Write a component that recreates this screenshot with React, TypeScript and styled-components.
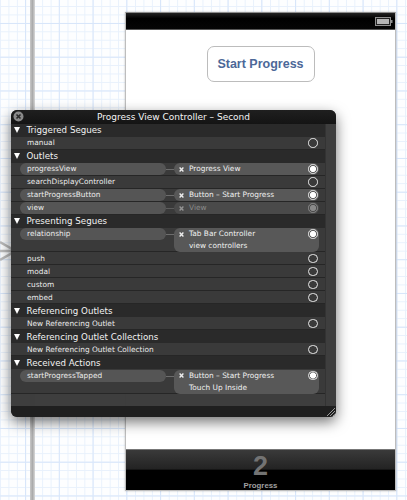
import styled, {createGlobalStyle} from 'styled-components';

const GlobalStyle = createGlobalStyle`
	html, body {
		margin: 0;
		padding: 0;
		background: #fff;
	}
`;

const Canvas = styled.div`
	position: relative;
	width: 407px;
	height: 500px;
	overflow: hidden;
	background-color: #fdfeff;
	background-image:
		linear-gradient(to right, #d8e6fa 1px, transparent 1px),
		linear-gradient(to bottom, #d8e6fa 1px, transparent 1px),
		linear-gradient(to right, #e8f1fc 1px, transparent 1px),
		linear-gradient(to bottom, #e8f1fc 1px, transparent 1px);
	background-size: 33.75px 33.75px, 33.75px 33.75px, 8.4375px 8.4375px, 8.4375px 8.4375px;
	background-position: 25px 23px, 25px 23px, 0 6px, 0 6px;
`;

const SegueRail = styled.div`
	position: absolute;
	left: 30px;
	top: 0;
	width: 5px;
	height: 500px;
	background: linear-gradient(to right, #c8c8c8, #ababab 50%, #d8d8d8);
`;

const SegueCross = styled.svg`
	position: absolute;
	left: 0;
	top: 240px;
`;

const Phone = styled.div`
	position: absolute;
	left: 125px;
	top: 12px;
	width: 271px;
	height: 479px;
	display: flex;
	flex-direction: column;
	box-sizing: border-box;
	background: #fff;
	border: 1px solid #bdbdbd;
	border-top-color: #8c8c8c;
	box-shadow: 0 0 2px rgba(0, 0, 0, 0.25);
`;

const StatusBar = styled.div`
	height: 16px;
	display: flex;
	justify-content: flex-end;
	align-items: center;
	padding-right: 2px;
	background: linear-gradient(to bottom, #222, #000 35%, #050505);
	border-bottom: 1px solid #555;
`;

const Body = styled.div`
	flex: 1;
	display: flex;
	justify-content: center;
	align-items: flex-start;
	padding-top: 16px;
`;

const StartButton = styled.button`
	width: 108px;
	height: 36px;
	padding: 0;
	border: 1px solid #bcbcbc;
	border-radius: 7px;
	background: #fff;
	color: #4c6898;
	font-family: 'Liberation Sans', Arial, sans-serif;
	font-size: 12.5px;
	font-weight: 700;
`;

const TabBar = styled.div`
	height: 41px;
	display: flex;
	flex-direction: column;
	align-items: center;
	background: linear-gradient(to bottom, #3a3a3a 0, #232323 48%, #000 50%, #000 100%);
	border-top: 1px solid #777;
	box-sizing: border-box;
`;

const TabGlyph = styled.div`
	margin-top: 2px;
	height: 29px;
	color: #737373;
	font-family: 'Liberation Sans', Arial, sans-serif;
	font-size: 27px;
	line-height: 28px;
	font-weight: 700;
`;

const TabLabel = styled.div`
	color: #a0a0a0;
	font-family: 'Liberation Sans', Arial, sans-serif;
	font-size: 7.8px;
	line-height: 9px;
	font-weight: 700;
`;

const Inspector = styled.div`
	position: absolute;
	left: 11px;
	top: 110px;
	width: 325px;
	height: 307px;
	display: flex;
	flex-direction: column;
	border-radius: 6px;
	overflow: hidden;
	background: rgba(58, 58, 58, 0.98);
	font-family: 'DejaVu Sans', Verdana, sans-serif;
	color: #eee;
`;

const InspectorShadow = styled.div`
	position: absolute;
	left: 11px;
	top: 110px;
	width: 325px;
	height: 307px;
	border-radius: 6px;
	box-shadow: 0 5px 14px rgba(0, 0, 0, 0.55);
`;

const TitleBar = styled.div`
	position: relative;
	height: 13.5px;
	flex: none;
	display: flex;
	justify-content: center;
	align-items: center;
	background: linear-gradient(to bottom, #1f1f1f, #141414);
	color: #f4f4f4;
	font-size: 9px;
`;

const CloseIcon = styled.svg`
	position: absolute;
	left: 2px;
	top: 1px;
`;

const Content = styled.div`
	flex: 1;
	display: flex;
	min-height: 0;
`;

const List = styled.div`
	width: 314px;
	display: flex;
	flex-direction: column;
`;

const Scrollbar = styled.div`
	flex: 1;
	background: #3e3e3e;
	border-left: 1px solid #333;
`;

const SectionHeader = styled.div`
	height: 13px;
	flex: none;
	display: flex;
	align-items: center;
	gap: 6.5px;
	padding-left: 3px;
	box-sizing: border-box;
	background: #2a2a2a;
	color: #f2f2f2;
	font-size: 8.7px;
`;

const Triangle = styled.span`
	width: 0;
	height: 0;
	border-left: 3.5px solid transparent;
	border-right: 3.5px solid transparent;
	border-top: 6px solid #fff;
`;

const Row = styled.div<{$tall?: boolean}>`
	height: ${(p) => (p.$tall ? '24.5px' : '13px')};
	flex: none;
	display: flex;
	align-items: flex-start;
	box-sizing: border-box;
	padding: 0.5px 6px 0 9px;
	background: #3a3a3a;
	border-bottom: 1px solid #262626;
	font-size: 7.4px;
	color: #ececec;
`;

const PlainLabel = styled.span`
	flex: 1;
	padding-left: 7px;
	line-height: 12px;
`;

const SourcePill = styled.div`
	width: 146px;
	height: 12px;
	flex: none;
	box-sizing: border-box;
	padding-left: 7px;
	border-radius: 6px;
	background: #555;
	line-height: 12px;
`;

const Link = styled.div<{$faded?: boolean}>`
	width: 8px;
	height: 1px;
	flex: none;
	margin-top: 6px;
	background: ${(p) => (p.$faded ? '#5c5c5c' : '#6d6d6d')};
`;

const TargetPill = styled.div<{$tall?: boolean; $faded?: boolean}>`
	flex: 1;
	height: ${(p) => (p.$tall ? '24px' : '12px')};
	display: flex;
	align-items: flex-start;
	border-radius: 6px;
	background: ${(p) => (p.$faded ? '#4a4a4a' : '#585858')};
	color: ${(p) => (p.$faded ? '#8a8a8a' : '#f0f0f0')};
	line-height: 12px;
`;

const RemoveIcon = styled.svg<{$faded?: boolean}>`
	flex: none;
	margin: 3.5px 5px 0 5px;
	opacity: ${(p) => (p.$faded ? 0.45 : 1)};
`;

const TargetText = styled.div`
	flex: 1;
`;

const Port = styled.span<{$on?: boolean; $faded?: boolean}>`
	width: 9.5px;
	height: 9.5px;
	flex: none;
	margin: 1.25px 1.5px 0 0;
	box-sizing: border-box;
	border-radius: 50%;
	border: 1px solid ${(p) => (p.$faded ? '#8a8a8a' : '#e8e8e8')};
	background: ${(p) =>
		p.$on
			? `radial-gradient(circle, ${p.$faded ? '#8a8a8a' : '#fff'} 0 2.8px, transparent 3.3px)`
			: 'transparent'};
`;

const Footer = styled.div`
	height: 11px;
	flex: none;
	display: flex;
	justify-content: flex-end;
	align-items: flex-end;
	background: #1f1f1f;
`;

const Remove = ({faded}: {faded?: boolean}) => (
	<RemoveIcon $faded={faded} width="5" height="5" viewBox="0 0 5 5">
		<path d="M0.6 0.6L4.4 4.4M4.4 0.6L0.6 4.4" stroke="#eee" strokeWidth="1.4" />
	</RemoveIcon>
);

const Plain = ({label}: {label: string}) => (
	<Row>
		<PlainLabel>{label}</PlainLabel>
		<Port />
	</Row>
);

const Connected = ({
	source,
	lines,
	faded,
}: {
	source: string;
	lines: string[];
	faded?: boolean;
}) => {
	const tall = lines.length > 1;
	return (
		<Row $tall={tall}>
			<SourcePill>{source}</SourcePill>
			<Link $faded={faded} />
			<TargetPill $tall={tall} $faded={faded}>
				<Remove faded={faded} />
				<TargetText>
					{lines.map((line) => (
						<div key={line}>{line}</div>
					))}
				</TargetText>
				<Port $on $faded={faded} />
			</TargetPill>
		</Row>
	);
};

const Section = ({title}: {title: string}) => (
	<SectionHeader>
		<Triangle />
		{title}
	</SectionHeader>
);

export default function App() {
	return (
		<>
			<GlobalStyle />
			<Canvas>
				<SegueRail />
				<SegueCross width="12" height="22" viewBox="0 0 12 22">
					<path
						d="M0 2L12 9M0 20L12 13M0 11H12"
						stroke="#bbb"
						strokeWidth="2.4"
						fill="none"
					/>
				</SegueCross>
				<Phone>
					<StatusBar>
						<svg width="18" height="9" viewBox="0 0 18 9">
							<rect x="0.5" y="0.5" width="15" height="8" fill="#222" stroke="#8f8f8f" />
							<rect x="2" y="2" width="12" height="5" fill="#b5b5b5" />
							<rect x="16" y="3" width="1.5" height="3" fill="#8f8f8f" />
						</svg>
					</StatusBar>
					<Body>
						<StartButton>Start Progress</StartButton>
					</Body>
					<TabBar>
						<TabGlyph>2</TabGlyph>
						<TabLabel>Progress</TabLabel>
					</TabBar>
				</Phone>
				<InspectorShadow />
				<Inspector>
					<TitleBar>
						<CloseIcon width="11" height="11" viewBox="0 0 11 11">
							<circle cx="5.5" cy="5.5" r="5" fill="#8a8a8a" />
							<path d="M3.5 3.5L7.5 7.5M7.5 3.5L3.5 7.5" stroke="#2a2a2a" strokeWidth="1.6" />
						</CloseIcon>
						Progress View Controller – Second
					</TitleBar>
					<Content>
						<List>
							<Section title="Triggered Segues" />
							<Plain label="manual" />
							<Section title="Outlets" />
							<Connected source="progressView" lines={['Progress View']} />
							<Plain label="searchDisplayController" />
							<Connected source="startProgressButton" lines={['Button – Start Progress']} />
							<Connected source="view" lines={['View']} faded />
							<Section title="Presenting Segues" />
							<Connected
								source="relationship"
								lines={['Tab Bar Controller', 'view controllers']}
							/>
							<Plain label="push" />
							<Plain label="modal" />
							<Plain label="custom" />
							<Plain label="embed" />
							<Section title="Referencing Outlets" />
							<Plain label="New Referencing Outlet" />
							<Section title="Referencing Outlet Collections" />
							<Plain label="New Referencing Outlet Collection" />
							<Section title="Received Actions" />
							<Connected
								source="startProgressTapped"
								lines={['Button – Start Progress', 'Touch Up Inside']}
							/>
						</List>
						<Scrollbar />
					</Content>
					<Footer>
						<svg width="10" height="10" viewBox="0 0 10 10">
							<path d="M1 9L9 1M4 9L9 4M7 9L9 7" stroke="#9a9a9a" strokeWidth="1" />
						</svg>
					</Footer>
				</Inspector>
			</Canvas>
		</>
	);
}
